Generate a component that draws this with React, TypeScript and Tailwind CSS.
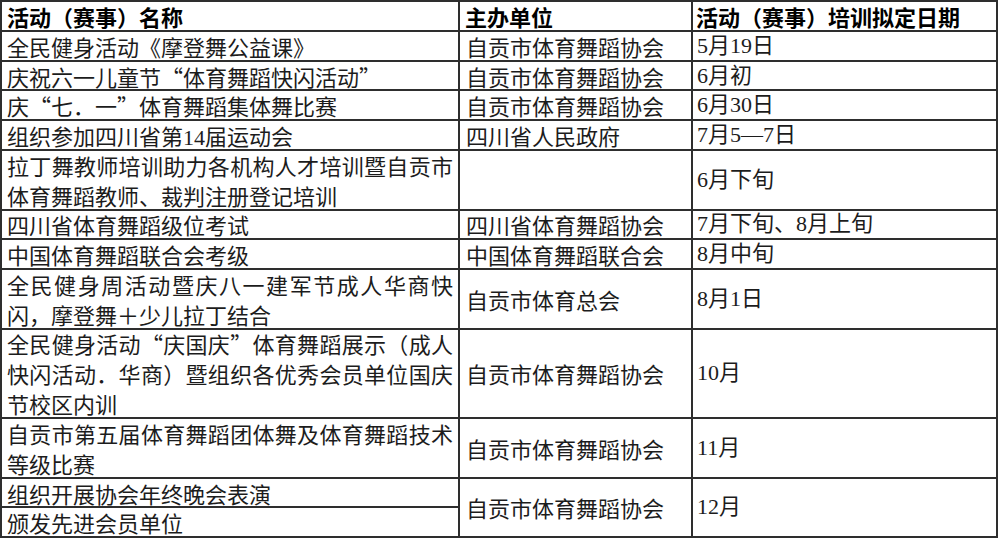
import React from "react";

type Row = {
  a: React.ReactNode;
  b?: React.ReactNode;
  c?: React.ReactNode;
  span?: boolean;
  skipBC?: boolean;
};

const rows: Row[] = [
  { a: "全民健身活动《摩登舞公益课》", b: "自贡市体育舞蹈协会", c: "5月19日" },
  { a: "庆祝六一儿童节“体育舞蹈快闪活动”", b: "自贡市体育舞蹈协会", c: "6月初" },
  { a: "庆“七．一”体育舞蹈集体舞比赛", b: "自贡市体育舞蹈协会", c: "6月30日" },
  {
    a: (
      <>
        组织参加四川省第<span className="font-['Liberation_Serif',serif] leading-none">14</span>届运动会
      </>
    ),
    b: "四川省人民政府",
    c: "7月5—7日",
  },
  { a: "拉丁舞教师培训助力各机构人才培训暨自贡市体育舞蹈教师、裁判注册登记培训", b: "", c: "6月下旬" },
  { a: "四川省体育舞蹈级位考试", b: "四川省体育舞蹈协会", c: "7月下旬、8月上旬" },
  { a: "中国体育舞蹈联合会考级", b: "中国体育舞蹈联合会", c: "8月中旬" },
  { a: "全民健身周活动暨庆八一建军节成人华商快闪，摩登舞＋少儿拉丁结合", b: "自贡市体育总会", c: "8月1日" },
  {
    a: "全民健身活动“庆国庆”体育舞蹈展示（成人快闪活动．华商）暨组织各优秀会员单位国庆节校区内训",
    b: "自贡市体育舞蹈协会",
    c: "10月",
  },
  { a: "自贡市第五届体育舞蹈团体舞及体育舞蹈技术等级比赛", b: "自贡市体育舞蹈协会", c: "11月" },
  { a: "组织开展协会年终晚会表演", b: "自贡市体育舞蹈协会", c: "12月", span: true },
  { a: "颁发先进会员单位", skipBC: true },
];

export default function App() {
  const cell = "bg-white flex items-center leading-[30px] text-[22px] text-[#1c1c1c]";
  const cjk = "font-['Noto_Sans_CJK_SC',sans-serif]";
  const serif = "font-['Liberation_Serif','Noto_Sans_CJK_SC',serif]";
  return (
    <div className={`w-[1000px] h-[538px] bg-white overflow-hidden ${cjk}`}>
      <div className="w-[998px] h-[538px] bg-[#2e2e2e] p-[2px] grid gap-[2px] grid-cols-[456px_231px_303px] grid-rows-[27.8px_27.8px_27.8px_27.8px_27.8px_57.6px_27.8px_27.8px_57.6px_87.3px_57.6px_27.8px_27.8px]">
        <div className={`${cell} pl-[5px] font-bold text-black`}>活动（赛事）名称</div>
        <div className={`${cell} pl-[5px] font-bold text-black`}>主办单位</div>
        <div className={`${cell} pl-[3px] font-bold text-black`}>活动（赛事）培训拟定日期</div>
        {rows.map((r, i) => (
          <React.Fragment key={i}>
            <div className={`${cell} pl-[5px] pr-[5px]`}>
              <div className="w-full text-justify">{r.a}</div>
            </div>
            {!r.skipBC && (
              <>
                <div className={`${cell} pl-[6px] ${r.span ? "row-span-2" : ""}`}>{r.b}</div>
                <div className={`${cell} ${serif} pl-[4px] ${r.span ? "row-span-2" : ""}`}>{r.c}</div>
              </>
            )}
          </React.Fragment>
        ))}
      </div>
    </div>
  );
}
